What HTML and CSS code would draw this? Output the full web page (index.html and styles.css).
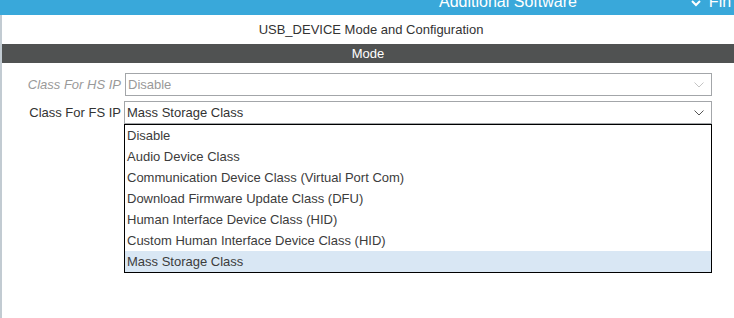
FILE: index.html
```html
<!DOCTYPE html>
<html lang="en">
<head>
  <meta charset="UTF-8">
  <title>USB_DEVICE Mode and Configuration</title>
  <link rel="stylesheet" href="styles.css">
</head>
<body>
  <div class="top-bar">
    <span class="tab-title">Additional Software</span>
    <span class="tab-extra">
      <svg class="tab-chevron" width="10" height="7" viewBox="0 0 10 7"><path d="M1 1 L5 5 L9 1" fill="none" stroke="#fff" stroke-width="2"/></svg>
      Fin
    </span>
  </div>
  <div class="workspace">
    <div class="side-strip"></div>
    <div class="panel">
      <div class="panel-title">USB_DEVICE Mode and Configuration</div>
      <div class="section-bar">Mode</div>
      <div class="mode-form">
        <label class="field-label disabled">Class For HS IP</label>
        <div class="select disabled">
          <span>Disable</span>
          <svg class="arrow" width="10" height="6" viewBox="0 0 10 6"><path d="M0.5 0.5 L5 5 L9.5 0.5" fill="none" stroke="#c4c4c4" stroke-width="1"/></svg>
        </div>

        <label class="field-label">Class For FS IP</label>
        <div class="select-wrap">
          <div class="select">
            <span>Mass Storage Class</span>
            <svg class="arrow" width="10" height="6" viewBox="0 0 10 6"><path d="M0.5 0.5 L5 5 L9.5 0.5" fill="none" stroke="#555" stroke-width="1"/></svg>
          </div>
          <ul class="option-list">
            <li>Disable</li>
            <li>Audio Device Class</li>
            <li>Communication Device Class (Virtual Port Com)</li>
            <li>Download Firmware Update Class (DFU)</li>
            <li>Human Interface Device Class (HID)</li>
            <li>Custom Human Interface Device Class (HID)</li>
            <li class="selected">Mass Storage Class</li>
          </ul>
        </div>
      </div>
    </div>
  </div>
</body>
</html>
```

FILE: styles.css
```css
body {
  margin: 0;
  font-family: 'Liberation Sans', Arial, sans-serif;
  background-color: #fff;
  overflow: hidden;
  height: 318px;
}

.top-bar {
  height: 15px;
  background-color: #39a8da;
  color: #fff;
  display: flex;
  align-items: flex-end;
  overflow: hidden;
  font-size: 16px;
  line-height: 18px;
}

.tab-title {
  margin-left: 439px;
  margin-bottom: 4px;
  white-space: nowrap;
}

.tab-extra {
  margin-left: 114px;
  margin-bottom: 4px;
  white-space: nowrap;
  display: flex;
  align-items: center;
  gap: 8px;
}

.tab-chevron {
  margin-top: 2px;
}

.workspace {
  display: flex;
  height: 303px;
}

.side-strip {
  width: 2px;
  background-color: #c2cbd2;
}

.panel {
  flex: 1;
}

.panel-title {
  height: 29px;
  line-height: 30px;
  text-align: center;
  font-size: 13px;
  color: #333;
  padding-left: 6px;
}

.section-bar {
  height: 19px;
  line-height: 19px;
  background-color: #505252;
  color: #fff;
  text-align: center;
  font-size: 13px;
}

.mode-form {
  display: grid;
  grid-template-columns: 122px 588px;
  row-gap: 5px;
  padding-top: 10px;
  font-size: 13px;
  color: #333;
}

.field-label {
  text-align: right;
  line-height: 23px;
  padding-right: 3px;
}

.field-label.disabled {
  color: #999;
  font-style: italic;
}

.select {
  height: 21px;
  border: 1px solid #a3a6a9;
  display: flex;
  align-items: center;
  justify-content: space-between;
  padding: 0 7px 0 2px;
}

.select.disabled {
  color: #999;
  margin-left: 1px;
}

.option-list {
  list-style: none;
  margin: 0;
  padding: 0;
  border: 1px solid #000;
  width: 586px;
}

.option-list li {
  height: 21px;
  line-height: 21px;
  padding-left: 2px;
  color: #3c3c3c;
}

.option-list li.selected {
  background-color: #d9e7f4;
}
```
